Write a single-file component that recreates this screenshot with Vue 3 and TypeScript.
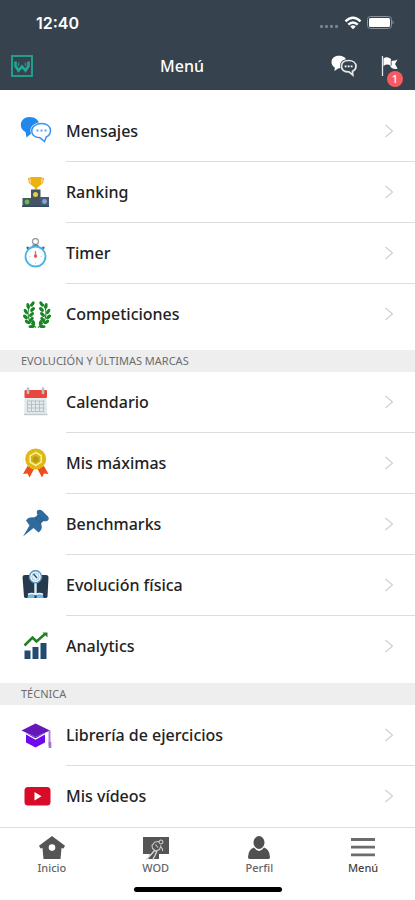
<script setup lang="ts">
interface MenuItem {
  id: string
  label: string
}

interface MenuGroup {
  title?: string
  items: MenuItem[]
}

const groups: MenuGroup[] = [
  {
    items: [
      { id: 'messages', label: 'Mensajes' },
      { id: 'ranking', label: 'Ranking' },
      { id: 'timer', label: 'Timer' },
      { id: 'competitions', label: 'Competiciones' },
    ],
  },
  {
    title: 'Evolución y últimas marcas',
    items: [
      { id: 'calendar', label: 'Calendario' },
      { id: 'records', label: 'Mis máximas' },
      { id: 'benchmarks', label: 'Benchmarks' },
      { id: 'body', label: 'Evolución física' },
      { id: 'analytics', label: 'Analytics' },
    ],
  },
  {
    title: 'Técnica',
    items: [
      { id: 'library', label: 'Librería de ejercicios' },
      { id: 'videos', label: 'Mis vídeos' },
    ],
  },
]

const tabs: MenuItem[] = [
  { id: 'home', label: 'Inicio' },
  { id: 'wod', label: 'WOD' },
  { id: 'profile', label: 'Perfil' },
  { id: 'menu', label: 'Menú' },
]

// Leaves of the left laurel branch: x, y, rotation in degrees
const leaves: [number, number, number][] = [
  [11.5, 5, -60],
  [7, 7, 85],
  [11.5, 10.5, -45],
  [4.8, 12.5, 60],
  [10.5, 15.5, -40],
  [4.5, 18, 45],
  [10.5, 20.5, -60],
  [6.5, 23, 30],
  [12.5, 24, -100],
  [10.5, 27.5, 0],
]
</script>

<template>
  <div class="screen">
    <header class="header">
      <div class="status">
        <span class="time">12:40</span>
        <svg class="status-icons" width="76" height="16" viewBox="0 0 76 16" aria-hidden="true">
          <g fill="#78838b">
            <rect x="1" y="10" width="3" height="3" rx="1" /><rect x="6" y="10" width="3" height="3" rx="1" />
            <rect x="11" y="10" width="3" height="3" rx="1" /><rect x="16" y="10" width="3" height="3" rx="1" />
          </g>
          <g fill="none" stroke="#fff" stroke-width="2.500">
            <path d="M26.500 6.300Q34 -.8 41.500 6.300" /><path d="M29.300 9.600Q34 5.300 38.700 9.600" />
          </g>
          <path d="M31.300 11.500Q34 9.200 36.700 11.500L34 14.200Z" fill="#fff" />
          <rect x="48.500" y="1.500" width="24" height="12" rx="3" fill="none" stroke="#87919a" />
          <rect x="50" y="3" width="21" height="9" rx="1.500" fill="#fff" />
          <path d="M73.500 5.500Q76 7.500 73.500 9.500Z" fill="#87919a" />
        </svg>
      </div>
      <nav class="nav">
        <a class="logo" href="#" aria-label="Inicio">
          <svg width="22" height="22" viewBox="0 0 22 22">
            <rect x="1" y="1" width="20" height="20" fill="none" stroke="#20a795" stroke-width="1.800" />
            <path d="M4.500 6.500V11L7.500 15.500L11 11.500L14.500 15.500L17.500 11V6.500" fill="none" stroke="#20a795" stroke-width="2.600" />
            <path d="M7.500 7.500V11M14.500 7.500V11" stroke="#218d84" stroke-width="1.500" />
          </svg>
        </a>
        <h1 class="title">Menú</h1>
        <div class="actions">
          <button class="action" type="button" aria-label="Mensajes">
            <svg width="26" height="22" viewBox="0 0 26 22">
              <path d="M8 .8C3.500.8.500 3.500.500 7c0 2.500 1.300 4.300 3.300 5.500L3.500 16l4-2.700C12 13.200 15.500 11 15.500 7S12.500.8 8 .8Z" fill="#fff" />
              <path d="M17.500 5.500c4.500 0 7.500 2.300 7.500 5.700 0 2.200-1.300 4-3.500 5l.3 3.800-3.800-3.100c-4.600 0-7.500-2.200-7.500-5.700s2.600-5.700 7-5.700Z" fill="#36434e" stroke="#36434e" stroke-width="3" />
              <path d="M17.500 5.500c4.500 0 7.500 2.300 7.500 5.700 0 2.200-1.300 4-3.500 5l.3 3.800-3.800-3.100c-4.600 0-7.500-2.200-7.500-5.700s2.600-5.700 7-5.700Z" fill="#36434e" stroke="#e4e8ea" stroke-width="1.700" />
              <path d="M13.700 11.300h1.800m1.200 0h1.800m1.200 0h1.800" stroke="#fff" stroke-width="1.800" />
            </svg>
          </button>
          <button class="action" type="button" aria-label="Avisos">
            <svg width="18" height="22" viewBox="0 0 18 22">
              <path d="M1.500 1V21" stroke="#e4e8ea" stroke-width="1.300" />
              <path d="M2.500 3.500Q6 1 10 4V5.500Q13 6.500 16.500 4.500L14 9L16.500 13.500Q13 15 9.500 12V10.500Q6 8.500 2.500 11Z" fill="#fff" />
              <path d="M10.200 5V10.500" stroke="#36434e" stroke-width=".8" />
            </svg>
            <span class="badge">1</span>
          </button>
        </div>
      </nav>
    </header>

    <main class="content">
      <section v-for="(group, g) in groups" :key="g" class="group">
        <h2 v-if="group.title" class="group-title">{{ group.title }}</h2>
        <ul class="list">
          <li v-for="item in group.items" :key="item.id">
            <a class="row" href="#">
              <svg class="row-icon" width="32" height="32" viewBox="0 0 32 32" aria-hidden="true">
                <g v-if="item.id === 'messages'">
                  <path d="M9.500 1C4.500 1 .8 4.300 .8 9c0 3.200 1.900 5.600 4.700 7L6.500 21.500l5.500-4.500c4.500-.4 7.500-3.200 7.500-7.700C19.500 4.500 15 1 9.500 1Z" fill="#2388ee" />
                  <path d="M21.500 7.500c5.400 0 9 3 9 7.200 0 2.900-1.600 5-4.200 6.200L24.500 25.500 20 21.800c-5-.3-8.300-2.900-8.300-7 0-4.300 4.300-7.300 9.800-7.300Z" fill="#fff" stroke="#fff" stroke-width="2.600" />
                  <path d="M21.500 7.500c5.400 0 9 3 9 7.200 0 2.900-1.600 5-4.200 6.200L24.500 25.500 20 21.800c-5-.3-8.300-2.900-8.300-7 0-4.300 4.300-7.300 9.800-7.300Z" fill="#fff" stroke="#3b94ef" stroke-width="1.500" />
                  <path d="M16.500 14.500h2m2 0h2m2 0h2" stroke="#5ba6f3" stroke-width="1.800" />
                </g>
                <g v-else-if="item.id === 'ranking'">
                  <path d="M11.500 1.500H8.700c0 4 1.800 6 5 6.500M20.500 1.500h2.800c0 4-1.800 6-5 6.500" fill="none" stroke="#f3b44a" stroke-width="1.500" />
                  <path d="M10.500 0h11V3.500c0 4-1.800 6-4.300 7v2h-2.400v-2c-2.500-1-4.300-3-4.300-7Z" fill="#eeb20f" />
                  <rect x="2.500" y="21" width="9" height="9" fill="#405a62" /><rect x="20" y="20" width="9" height="10" fill="#465c79" />
                  <rect x="11" y="12.500" width="9.500" height="17" fill="#435466" />
                  <path d="M2 28.500h27v1.500H2Z" fill="#34495b" />
                  <circle cx="15.500" cy="17.500" r="2.500" fill="#e5cf3d" /><circle cx="7" cy="25" r="2.400" fill="#70b750" /><circle cx="24.500" cy="24.500" r="2.400" fill="#8ba5ce" />
                </g>
                <g v-else-if="item.id === 'timer'" fill="none">
                  <circle cx="15.500" cy="3.500" r="3" stroke="#959ba0" stroke-width="1.300" />
                  <path d="M15.500 6V9M12.500 7.500h6" stroke="#6c7880" stroke-width="1.500" />
                  <path d="M7 9l2 2.500M24 9L22 11.500" stroke="#526c7c" stroke-width="2.500" />
                  <circle cx="15.500" cy="18.500" r="10" fill="#fafeff" stroke="#49b3e6" stroke-width="1.800" />
                  <path d="M15.500 13V20" stroke="#e36873" stroke-width="1.300" /><circle cx="15.500" cy="18" r="1.700" fill="#df5b66" />
                  <path d="M9 18.500h1.500m10 0H22M15.500 24.500v1.500" stroke="#cfd9df" />
                </g>
                <g v-else-if="item.id === 'competitions'" fill="#168522">
                  <g v-for="side in [1, -1]" :key="side" :transform="side === 1 ? 'translate(1 0)' : 'translate(33 0) scale(-1 1)'">
                    <path d="M10 5C5.500 11 5.500 23 15 28.500" fill="none" stroke="#168522" stroke-width="1.100" />
                    <ellipse v-for="([x, y, a], i) in leaves" :key="i" rx="3" ry="1.600" :transform="`translate(${x} ${y}) rotate(${a})`" />
                  </g>
                </g>
                <g v-else-if="item.id === 'calendar'">
                  <path d="M4.500 9h22l.7 19h-23Z" fill="#e4e9eb" /><path d="M4 27.500h23.500" stroke="#c1cdd0" stroke-width="1.500" />
                  <rect x="4.500" y="3" width="22.500" height="8" rx="1" fill="#e7473d" />
                  <path d="M8 1.500V6M23 1.500V6" stroke="#bdbfc2" stroke-width="2.600" stroke-linecap="round" />
                  <path d="M7.500 13.500v11m4-11v11m4-11v11m4-11v11m4-11v11M7 14h17.500M7 17.500h17.500M7 21h17.500M7 24.500h17.500" stroke="#b3bec3" stroke-width=".9" />
                </g>
                <g v-else-if="item.id === 'records'">
                  <path d="M7.500 18L3 26l4.500-.5L9.500 29.500 14 21ZM24 18l4.500 8-4.500-.5-2 4L17.500 21Z" fill="#ee4d20" />
                  <circle cx="15.700" cy="11" r="10.500" fill="#dfb918" />
                  <path d="M15.700 4.500l5.500 3.200v6.400l-5.500 3.200-5.500-3.200V7.700Z" fill="#d3b516" stroke="#fff2a2" stroke-width="1.500" />
                  <path d="M15.700 8l2.800 1.700V13l-2.800 1.700-2.800-1.700V9.700Z" fill="#b99b10" />
                </g>
                <g v-else-if="item.id === 'benchmarks'">
                  <path d="M17.500 1.300Q20 -.3 22.500 2L28 7.500Q30 10.500 27 12Q25 12.500 23.500 12L21 14.500Q23.500 20 18.500 23.500L13.500 19L3 27.500L9.500 16.500L6 11.500Q8.500 7.500 14.500 8.500L17.500 6Q16 3 17.500 1.300Z" fill="#316b9e" />
                  <path d="M17.500 6l6 6M14.500 8.500l6.500 6" stroke="#255984" stroke-width="1" />
                </g>
                <g v-else-if="item.id === 'body'">
                  <path d="M2.500 7Q2.500 5 5 5h21q2.500 0 2.500 2l-1 19.500q-.2 1.500-2 1.500H6q-1.800 0-2-1.500Z" fill="#26394d" />
                  <path d="M15.500 11v14" stroke="#d8e9f3" stroke-width="2.500" />
                  <path d="M7.500 28q0-4.500 4.500-4.500h2.500V28ZM16.500 28v-4.500H19q4.500 0 4.500 4.500Z" fill="#70b8e7" />
                  <path d="M8 24.500q3.500-2 7.500 0 4-2 7.500 0" fill="none" stroke="#f1f9fd" stroke-width="1.500" />
                  <circle cx="15.500" cy="6.700" r="6" fill="#fff" stroke="#609bc4" stroke-width="1.500" />
                  <circle cx="15.500" cy="6.700" r="3.700" fill="#e7f5fb" stroke="#87bbdc" stroke-width=".8" />
                  <path d="M13.500 4l3.500 4" stroke="#2c5271" stroke-width="1.500" />
                </g>
                <g v-else-if="item.id === 'analytics'">
                  <path d="M4.500 19.500h6v8.500h-6Zm8-3.500h6V28h-6ZM20.500 12h6v16h-6Z" fill="#234b70" />
                  <path d="M4.500 14.500L12.500 6.500L16.500 10.500L25 3" fill="none" stroke="#228023" stroke-width="2.500" />
                  <path d="M22.500 1.500h5v5Z" fill="#228023" />
                </g>
                <g v-else-if="item.id === 'library'">
                  <path d="M6 13v9.500Q11 25 15.500 27.500 20 25 25 22.500V13l-9.500 4Z" fill="#6d09ec" />
                  <path d="M5.500 13.500l10 5.500 10-5.500" fill="none" stroke="#fff" stroke-width="1.300" />
                  <path d="M1.500 10.500L15.500 3.500L30 10.500L15.500 17Z" fill="#6518b9" />
                  <path d="M29.500 10.500V26" stroke="#b181d4" stroke-width="2" /><path d="M30 22v6" stroke="#a274cb" stroke-width="2.600" />
                </g>
                <g v-else>
                  <rect x="4.500" y="6" width="26" height="18.500" rx="3.500" fill="#d80b28" />
                  <path d="M14.500 11l7 4.200-7 4.200Z" fill="#fff" />
                </g>
              </svg>
              <span class="row-body">
                <span>{{ item.label }}</span>
                <svg width="10" height="16" viewBox="0 0 10 16" aria-hidden="true">
                  <path d="M1.500 2L8.500 8L1.500 14" fill="none" stroke="#ceced0" stroke-width="1.100" />
                </svg>
              </span>
            </a>
          </li>
        </ul>
      </section>
    </main>

    <footer class="footer">
      <nav class="tabs">
        <a v-for="tab in tabs" :key="tab.id" class="tab" :class="{ active: tab.id === 'menu' }" href="#">
          <svg width="28" height="24" viewBox="0 0 28 24" aria-hidden="true">
            <path v-if="tab.id === 'home'" fill="#555" fill-rule="evenodd" d="M14 0L27 9.800L25.500 12.500L23.500 12L22.500 23h-17L4.500 12L2.500 12.500L1 9.800ZM14 8.300a3.300 3.300 0 1 0 0 6.600 3.300 3.300 0 0 0 0-6.600Z" />
            <g v-else-if="tab.id === 'wod'">
              <path d="M1 1h26v17H17v5H6l2-5H1Z" fill="#555" />
              <path d="M4 24l6-6.500 3-3.500M10.500 24l2.500-4.500 2-4.500" fill="none" stroke="#ddd" stroke-width="1.300" />
              <path d="M17 5.500l-4 .5-3 3.500.5 3 3 2.500 4-1.500 1.500-4M13.500 8.500l2.500 3M18.500 10.500l2 2.500v2" fill="none" stroke="#ccc" stroke-width="1.100" />
              <circle cx="19" cy="6" r="2" fill="#555" stroke="#ddd" />
            </g>
            <g v-else-if="tab.id === 'profile'" fill="#505050">
              <ellipse cx="14" cy="6.500" rx="5.500" ry="6.500" />
              <path d="M9 11.500Q14 18.500 19 11.500Q24.500 13 25 21Q25 23 23.500 23H4.500Q3 23 3 21Q3.500 13 9 11.500Z" />
            </g>
            <path v-else d="M2 3.500h24M2 11.200h24M2 18.800h24" stroke="#6c6c6c" stroke-width="2.800" />
          </svg>
          <span>{{ tab.label }}</span>
        </a>
      </nav>
      <div class="home-bar"></div>
    </footer>
  </div>
</template>

<style>
body {
  margin: 0;
  background: #fff;
}
</style>

<style scoped>
.screen {
  display: flex;
  flex-direction: column;
  min-height: 100vh;
  font-family: 'Noto Sans', 'Open Sans', sans-serif;
  color: #222;
}

a {
  color: inherit;
  text-decoration: none;
}

svg {
  display: block;
  flex: none;
}

.header {
  background: #36434e;
  color: #fff;
}

.status {
  display: flex;
  align-items: center;
  justify-content: space-between;
  height: 42px;
  padding: 4px 20px 0 36px;
  box-sizing: border-box;
}

.time {
  font-family: Inter, sans-serif;
  font-size: 16px;
  font-weight: 600;
}

.nav {
  display: flex;
  align-items: center;
  height: 48px;
  padding: 0 16px 0 11px;
}

.title {
  flex: 1;
  margin: 0;
  text-align: center;
  font-size: 16px;
  font-weight: 500;
}

.actions {
  display: flex;
  gap: 24px;
}

.action {
  position: relative;
  padding: 0;
  border: 0;
  background: none;
}

.badge {
  position: absolute;
  top: 16px;
  right: -4px;
  width: 16px;
  height: 16px;
  border-radius: 50%;
  background: #f85a5e;
  color: #fff;
  font: 500 11px/16px 'Noto Sans', sans-serif;
  text-align: center;
}

.content {
  flex: 1;
  padding-top: 11px;
}

.group-title {
  height: 22px;
  margin: 6px 0 0;
  padding: 0 21px;
  background: #eee;
  color: #6c6c6c;
  font-size: 11px;
  font-weight: 400;
  line-height: 22px;
  text-transform: uppercase;
}

.group:nth-child(2) .group-title {
  margin-top: 5px;
}

.list {
  margin: 0;
  padding: 0;
  list-style: none;
}

.row {
  display: flex;
  align-items: center;
  gap: 14px;
  padding-left: 20px;
}

.row-body {
  display: flex;
  flex: 1;
  align-items: center;
  justify-content: space-between;
  height: 60px;
  padding-right: 21px;
  border-bottom: 1px solid #ddd;
  font-size: 16px;
  font-weight: 500;
}

li:last-child .row-body {
  border-color: transparent;
}

.footer {
  border-top: 1px solid #ddd;
}

.tabs {
  display: grid;
  grid-template-columns: repeat(4, 1fr);
  padding-top: 8px;
}

.tab {
  display: flex;
  flex-direction: column;
  align-items: center;
  gap: 1px;
  color: #666;
  font-size: 11px;
  font-weight: 500;
  line-height: 14px;
}

.tab.active {
  color: #444;
}

.home-bar {
  width: 148px;
  height: 5px;
  margin: 12px auto 8px;
  border-radius: 3px;
  background: #000;
}
</style>
